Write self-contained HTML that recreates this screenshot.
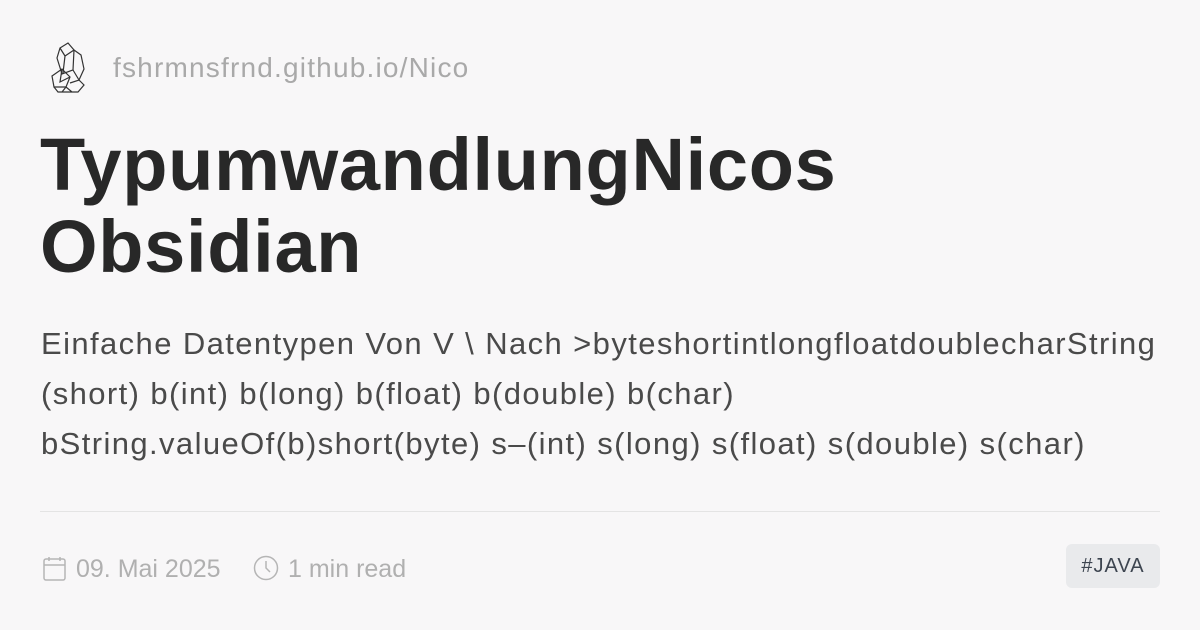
<!DOCTYPE html>
<html><head><meta charset="utf-8"><style>
body{margin:0;width:1200px;height:630px;background:#f8f7f8;font-family:"Liberation Sans",sans-serif;position:relative;overflow:hidden}
.site{position:absolute;left:113px;top:52px;font-size:28px;color:#a9a9a9;letter-spacing:1.2px}
h1{position:absolute;left:40px;top:124px;margin:0;font-size:74px;line-height:82px;font-weight:bold;color:#282828;letter-spacing:0.7px}
.desc{position:absolute;left:41px;top:319px;font-size:31px;line-height:50px;color:#4a4a4a;letter-spacing:1.4px;white-space:nowrap}
.hr{position:absolute;left:40px;right:40px;top:511px;height:1px;background:#e4e4e4}
.meta{position:absolute;top:555px;font-size:25px;color:#b0b0b0}
.tag{position:absolute;right:40px;top:544px;width:94px;height:44px;border-radius:6px;background:#e9eaec;color:#3d4550;font-size:20px;text-align:center;line-height:44px;letter-spacing:1px}
</style></head><body>
<svg style="position:absolute;left:48px;top:42px" width="40" height="52" viewBox="0 0 40 52" fill="none" stroke="#333" stroke-width="1.2">
<path d="M12 6 L20 1 L26 8 L25 28 L14 32 L9 16 Z M12 6 L17 14 L26 8 M17 14 L15 31"/>
<path d="M26 8 L33 13 L36 27 L31 38 L25 28"/>
<path d="M4 34 L14 27 L22 35 L18 45 L6 45 Z M14 27 L12 40 L22 35"/>
<path d="M6 45 L10 50 L30 50 L36 43 L31 38 L22 41 M14 50 L18 45 L24 50"/>
</svg>
<div class="site">fshrmnsfrnd.github.io/Nico</div>
<h1>TypumwandlungNicos<br>Obsidian</h1>
<div class="desc">Einfache Datentypen Von V \ Nach &gt;byteshortintlongfloatdoublecharString<br>(short) b(int) b(long) b(float) b(double) b(char)<br>bString.valueOf(b)short(byte) s–(int) s(long) s(float) s(double) s(char)</div>
<div class="hr"></div>
<svg style="position:absolute;left:43px;top:556px" width="24" height="26" viewBox="0 0 24 26" fill="none" stroke="#b5b5b5" stroke-width="1.5"><rect x="1" y="3" width="21" height="21" rx="2"/><path d="M1 9 H22 M6 1 V5 M17 1 V5"/></svg>
<div class="meta" style="left:76px">09. Mai 2025</div>
<svg style="position:absolute;left:253px;top:555px" width="26" height="26" viewBox="0 0 26 26" fill="none" stroke="#b5b5b5" stroke-width="1.5"><circle cx="13" cy="13" r="11.5"/><path d="M13 6 V13 L17 17"/></svg>
<div class="meta" style="left:288px">1 min read</div>
<div class="tag">#JAVA</div>
</body></html>
